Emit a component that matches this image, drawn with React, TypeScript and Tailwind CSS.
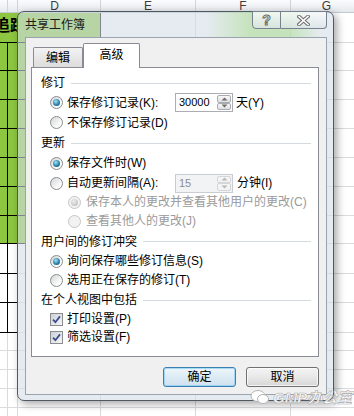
import React from 'react';

const font = "font-['Liberation_Sans','Noto_Sans_CJK_SC',sans-serif]";

const cols = ['w-[8px]', 'w-[10px]', 'w-[83px]', 'w-[95px]', 'w-[95px]', 'w-[72px]'];
const letters = ['', '', 'D', 'E', 'F', 'G'];
const rows = [
  'h-[30px]', 'h-[28px]', 'h-[29px]', 'h-[29px]', 'h-[29px]', 'h-[29px]', 'h-[29px]', 'h-[28px]',
  'h-[30px]', 'h-[29px]', 'h-[30px]', 'h-[18px]', 'h-[19px]', 'h-[19px]', 'h-[19px]', 'h-[19px]',
];

const Sheet: React.FC = () => (
  <div className="flex flex-col">
    <div className="flex h-[13px] border-b border-[#c3c8ce] bg-[linear-gradient(#fafbfc,#e6e9ed)]">
      {cols.map((w, i) => (
        <div
          key={i}
          className={`${w} flex shrink-0 items-start justify-center border-r border-[#d0d4d9] text-[12px] leading-none text-[#3c3c3c] ${i === 2 ? 'pr-[9px]' : ''}`}
        >
          <span>{letters[i]}</span>
        </div>
      ))}
    </div>
    {rows.map((h, r) => (
      <div key={r} className={`flex ${h}`}>
        {r === 0 ? (
          <>
            <div className="flex w-[18px] shrink-0 items-start overflow-hidden border-b border-black bg-[#8dc641] pt-[5px]">
              <span className="-ml-[6px] whitespace-nowrap text-[16px] font-bold leading-none text-black">追踪表</span>
            </div>
            <div className="w-[83px] shrink-0 border-b border-r border-black bg-[#8dc641]" />
          </>
        ) : (
          cols.slice(0, 3).map((w, c) => {
            const green = r < 8;
            const dark = r < 11 && c < 2;
            return (
              <div
                key={c}
                className={`${w} shrink-0 border-b border-r ${green ? 'bg-[#8dc641]' : 'bg-white'} ${dark || green ? 'border-black' : 'border-[#d9dbde]'}`}
              />
            );
          })
        )}
        {cols.slice(3).map((w, c) => (
          <div key={c} className={`${w} shrink-0 border-b border-r border-[#d9dbde] bg-white`} />
        ))}
      </div>
    ))}
  </div>
);

const Radio: React.FC<{ checked?: boolean; disabled?: boolean }> = ({ checked, disabled }) => (
  <span
    className={`flex h-[13px] w-[13px] shrink-0 items-center justify-center rounded-full border ${
      disabled ? 'border-[#c6c6c6] bg-[#f2f2f2]' : 'border-[#8a8c8e] bg-[linear-gradient(135deg,#d2d4d6,#fbfbfb_70%)]'
    }`}
  >
    {checked && (
      <span
        className={`h-[7px] w-[7px] rounded-full ${
          disabled
            ? 'bg-[radial-gradient(circle_at_40%_35%,#eeeeee,#b2b2b2)]'
            : 'bg-[radial-gradient(circle_at_40%_35%,#a6e4f8,#2b82ac_55%,#0e476a)]'
        }`}
      />
    )}
  </span>
);

const Check: React.FC = () => (
  <span className="flex h-[13px] w-[13px] shrink-0 items-center justify-center border border-[#8a8c8e] bg-white">
    <span className="flex h-[11px] w-[11px] items-center justify-center bg-[linear-gradient(135deg,#cdd1d6,#f5f6f7)]">
      <svg width="9" height="9" viewBox="0 0 9 9">
        <path d="M1 4.6 L3.4 7.2 L8 1.4" fill="none" stroke="#3b4d8c" strokeWidth="1.8" />
      </svg>
    </span>
  </span>
);

const Spin: React.FC<{ value: string; disabled?: boolean }> = ({ value, disabled }) => (
  <div
    className={`flex h-[19px] w-[58px] shrink-0 border ${
      disabled ? 'border-[#c9cdd2] bg-[#f2f3f5] text-[#8d8d8d]' : 'border-[#abadb3] bg-white text-black'
    }`}
  >
    <span className="flex-1 pl-[3px] text-[11px] leading-[17px]">{value}</span>
    <div className="flex w-[16px] flex-col p-px">
      {[0, 1].map((d) => (
        <span
          key={d}
          className={`flex flex-1 items-center justify-center rounded-[2px] border ${
            disabled ? 'border-[#d4d6d9] bg-[#f4f4f4]' : 'border-[#a9acb1] bg-[linear-gradient(#f8f8f8,#dedfe1)]'
          }`}
        >
          <svg width="7" height="4" viewBox="0 0 7 4">
            <path d={d === 0 ? 'M0.5 3.5 L3.5 0.5 L6.5 3.5 Z' : 'M0.5 0.5 L3.5 3.5 L6.5 0.5 Z'} fill={disabled ? '#b8b8b8' : '#6d6d6d'} />
          </svg>
        </span>
      ))}
    </div>
  </div>
);

const Group: React.FC<{ title: string; h: string }> = ({ title, h }) => (
  <div className={`flex ${h} items-center pl-[9px] pr-[7px]`}>
    <span className="leading-[14px]">{title}</span>
    <span className="ml-[6px] h-px flex-1 bg-[#d5dae0]" />
  </div>
);

const Row: React.FC<{ h: string; children: React.ReactNode; indent?: boolean }> = ({ h, children, indent }) => (
  <div className={`flex ${h} items-center ${indent ? 'pl-[36px]' : 'pl-[18px]'}`}>{children}</div>
);

export default function App() {
  return (
    <div className={`relative h-[416px] w-[354px] overflow-hidden bg-white text-[12px] text-black ${font}`}>
      <Sheet />

      <div className="absolute left-[17px] top-[11px] flex h-[390px] w-[317px] flex-col rounded-[7px] border border-[#4f5963] bg-[rgba(212,222,230,0.6)] shadow-[3px_3px_8px_rgba(0,0,0,0.35)]">
        <div className="flex h-[25px] shrink-0 items-start justify-between rounded-t-[6px] bg-[linear-gradient(90deg,transparent_60%,rgba(165,218,135,0.5)_74%,rgba(165,218,135,0.5)_86%,transparent_96%)] pl-[7px] pr-[6px]">
          <span className="mt-[6px] leading-[14px] text-[#1b1b1b]">共享工作簿</span>
          <div className="-mt-px flex">
            <div className="flex h-[18px] w-[29px] items-center justify-center rounded-bl-[4px] border border-[#76828d] bg-[linear-gradient(rgba(255,255,255,0.75),rgba(220,228,234,0.75))]">
              <span className="text-[14px] font-bold leading-none text-white [-webkit-text-stroke:1px_#6b6b6b]">?</span>
            </div>
            <div className="flex h-[18px] w-[46px] items-center justify-center rounded-br-[4px] border border-l-0 border-[#76828d] bg-[linear-gradient(rgba(255,255,255,0.75),rgba(220,228,234,0.75))]">
              <svg width="13" height="11" viewBox="0 0 13 11">
                <path d="M2 1.5 L11 9.5 M11 1.5 L2 9.5" stroke="#6b6b6b" strokeWidth="3.6" strokeLinecap="square" />
                <path d="M2 1.5 L11 9.5 M11 1.5 L2 9.5" stroke="#ffffff" strokeWidth="1.6" strokeLinecap="square" />
              </svg>
            </div>
          </div>
        </div>

        <div className="ml-[7px] mr-[6px] flex h-[358px] flex-col border border-[#98a4ae] bg-[#f0f0f0] pl-[5px] pt-[5px]">
          <div className="flex h-[24px] items-end pl-[2px]">
            <div className="flex h-[20px] w-[50px] items-center justify-center rounded-t-[2px] border border-b-0 border-[#898c95] bg-[linear-gradient(#f3f3f3,#dcdcdc)]">
              编辑
            </div>
            <div className="relative z-10 -mb-px flex h-[25px] w-[57px] items-center justify-center rounded-t-[2px] border border-b-0 border-[#898c95] bg-white pb-[2px]">
              高级
            </div>
          </div>

          <div className="flex h-[290px] w-[288px] flex-col border border-[#898c95] bg-white pt-[5px]">
            <Group title="修订" h="h-[20px]" />
            <Row h="h-[19px]">
              <div className="flex w-[125px] items-center">
                <Radio checked />
                <span className="ml-[4px]">保存修订记录(K):</span>
              </div>
              <Spin value="30000" />
              <span className="ml-[3px]">天(Y)</span>
            </Row>
            <Row h="h-[21px]">
              <Radio />
              <span className="ml-[4px]">不保存修订记录(D)</span>
            </Row>
            <Group title="更新" h="h-[20px]" />
            <Row h="h-[20px]">
              <Radio checked />
              <span className="ml-[4px]">保存文件时(W)</span>
            </Row>
            <Row h="h-[20px]">
              <div className="flex w-[125px] items-center">
                <Radio />
                <span className="ml-[4px]">自动更新间隔(A):</span>
              </div>
              <Spin value="15" disabled />
              <span className="ml-[4px]">分钟(I)</span>
            </Row>
            <Row h="h-[18px]" indent>
              <Radio checked disabled />
              <span className="ml-[5px] text-[#9a9a9a]">保存本人的更改并查看其他用户的更改(C)</span>
            </Row>
            <Row h="h-[20px]" indent>
              <Radio disabled />
              <span className="ml-[5px] text-[#9a9a9a]">查看其他人的更改(J)</span>
            </Row>
            <Group title="用户间的修订冲突" h="h-[21px]" />
            <Row h="h-[18px]">
              <Radio checked />
              <span className="ml-[4px]">询问保存哪些修订信息(S)</span>
            </Row>
            <Row h="h-[20px]">
              <Radio />
              <span className="ml-[4px]">选用正在保存的修订(T)</span>
            </Row>
            <Group title="在个人视图中包括" h="h-[20px]" />
            <Row h="h-[18px]">
              <Check />
              <span className="ml-[4px]">打印设置(P)</span>
            </Row>
            <Row h="h-[18px]">
              <Check />
              <span className="ml-[4px]">筛选设置(F)</span>
            </Row>
          </div>

          <div className="mt-[10px] flex w-[288px] justify-end gap-[10px]">
            <button className="flex h-[20px] w-[73px] items-center justify-center rounded-[3px] border border-[#3c7fb1] bg-[linear-gradient(#eef6fb,#dcebf5_50%,#cfe2ef)] shadow-[inset_0_0_0_1px_rgba(120,200,240,0.6)]">
              确定
            </button>
            <button className="flex h-[20px] w-[73px] items-center justify-center rounded-[3px] border border-[#707070] bg-[linear-gradient(#f4f4f4,#e8e8e8_50%,#d6d6d6)] shadow-[inset_0_0_0_1px_rgba(255,255,255,0.7)]">
              取消
            </button>
          </div>
        </div>
      </div>

      <div className="absolute left-[250px] top-[389px] flex items-center gap-[3px]">
        <svg width="20" height="16" viewBox="0 0 20 16">
          <ellipse cx="8" cy="7" rx="7" ry="5.5" fill="#ffffff" stroke="#b5b5b5" strokeWidth="1" />
          <ellipse cx="13" cy="10" rx="5.5" ry="4.5" fill="#ffffff" stroke="#b5b5b5" strokeWidth="1" />
        </svg>
        <span className="text-[15px] font-bold italic leading-none text-white [-webkit-text-stroke:0.6px_#a9a9a9]">GMP办公室</span>
      </div>
    </div>
  );
}
